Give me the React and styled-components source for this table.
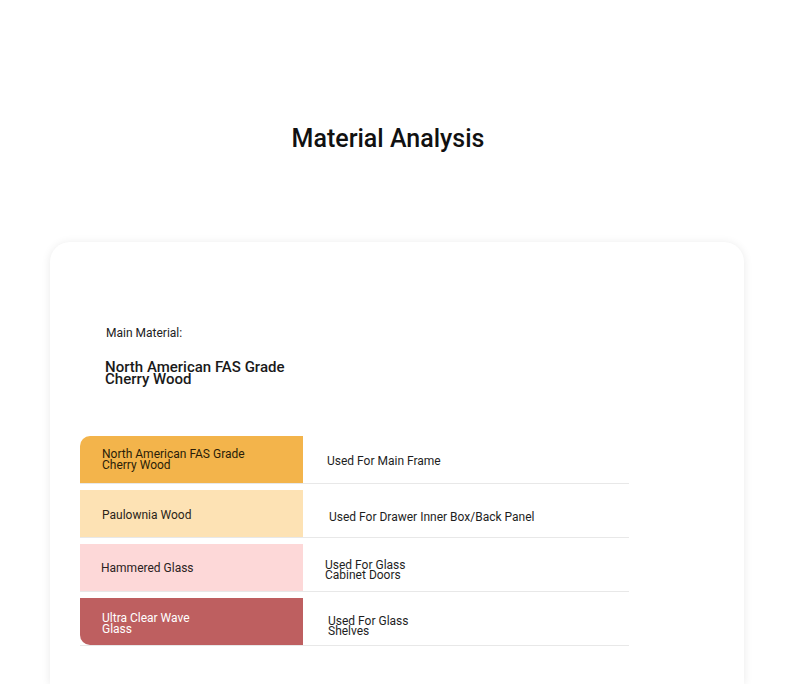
import React from "react";
import styled, { createGlobalStyle } from "styled-components";

const Global = createGlobalStyle`
  html, body { margin: 0; padding: 0; background: #ffffff; }
  body { font-family: Roboto, "Liberation Sans", Arial, sans-serif; color: #1a1a1a; }
  * { box-sizing: border-box; }
`;

const Page = styled.div`
  width: 790px;
  height: 684px;
  overflow: hidden;
  display: flex;
  flex-direction: column;
  align-items: center;
  padding-top: 125px;
`;

const Title = styled.h1`
  margin: 0 14px 0 0;
  font-size: 25px;
  line-height: 28px;
  font-weight: 500;
  color: #111;
`;

const Card = styled.section`
  margin-top: 89px;
  width: 694px;
  flex: 1;
  align-self: flex-start;
  margin-left: 50px;
  background: #fff;
  border-radius: 20px 20px 0 0;
  box-shadow: 0 1px 10px rgba(0, 0, 0, 0.09);
  padding: 84px 30px 0 30px;
`;

const Intro = styled.div`
  padding-left: 26px;
  display: flex;
  flex-direction: column;
  gap: 21px;
`;

const Label = styled.div`
  font-size: 12px;
  line-height: 14px;
  color: #222;
`;

const MainName = styled.div`
  font-size: 15px;
  line-height: 12px;
  font-weight: 500;
  color: #1a1a1a;
  padding-bottom: 6px;
  margin-left: -1px;
`;

const Table = styled.div`
  margin-top: 45px;
  width: 549px;
  display: flex;
  flex-direction: column;
  gap: 6px;
`;

const Row = styled.div`
  display: flex;
  height: 48px;
  border-bottom: 1px solid #e8e8e8;
`;

const NameCell = styled.div`
  width: 223px;
  flex-shrink: 0;
  display: flex;
  align-items: center;
  padding-left: ${(p) => p.$pad}px;
  padding-top: ${(p) => p.$shift}px;
  background: ${(p) => p.$bg};
  color: ${(p) => p.$fg};
  font-size: 12px;
  line-height: 11px;
  border-radius: ${(p) => p.$radius};
`;

const UseCell = styled.div`
  flex: 1;
  display: flex;
  align-items: center;
  padding-left: ${(p) => p.$pad}px;
  padding-top: ${(p) => p.$shift}px;
  font-size: 12px;
  line-height: 10px;
  color: #1e1e1e;
`;

const Lines = ({ lines }) =>
  lines.map((l, i) => (
    <React.Fragment key={i}>
      {i > 0 && <br />}
      {l}
    </React.Fragment>
  ));

const rows = [
  {
    name: ["North American FAS Grade", "Cherry Wood"],
    use: ["Used For Main Frame"],
    bg: "#f3b44b",
    fg: "#2a1d08",
    namePad: 22,
    nameShift: 1,
    usePad: 24,
    shift: 2,
    radius: "10px 0 0 0",
  },
  {
    name: ["Paulownia Wood"],
    use: ["Used For Drawer Inner Box/Back Panel"],
    bg: "#fde2b4",
    fg: "#2a2418",
    namePad: 22,
    nameShift: 3,
    usePad: 26,
    shift: 6,
    radius: "0",
  },
  {
    name: ["Hammered Glass"],
    use: ["Used For Glass", "Cabinet Doors"],
    bg: "#fdd8d8",
    fg: "#2b2222",
    namePad: 21,
    nameShift: 2,
    usePad: 22,
    shift: 4,
    radius: "0",
  },
  {
    name: ["Ultra Clear Wave", "Glass"],
    use: ["Used For Glass", "Shelves"],
    bg: "#be5f60",
    fg: "#ffffff",
    namePad: 22,
    nameShift: 4,
    usePad: 25,
    shift: 8,
    radius: "0 0 0 10px",
  },
];

export default function App() {
  return (
    <>
      <Global />
      <Page>
        <Title>Material Analysis</Title>
        <Card>
          <Intro>
            <Label>Main Material:</Label>
            <MainName>
              North American FAS Grade
              <br />
              Cherry Wood
            </MainName>
          </Intro>
          <Table>
            {rows.map((r, i) => (
              <Row key={i}>
                <NameCell
                  $bg={r.bg}
                  $fg={r.fg}
                  $pad={r.namePad}
                  $shift={r.nameShift}
                  $radius={r.radius}
                >
                  <span>
                    <Lines lines={r.name} />
                  </span>
                </NameCell>
                <UseCell $pad={r.usePad} $shift={r.shift}>
                  <span>
                    <Lines lines={r.use} />
                  </span>
                </UseCell>
              </Row>
            ))}
          </Table>
        </Card>
      </Page>
    </>
  );
}
